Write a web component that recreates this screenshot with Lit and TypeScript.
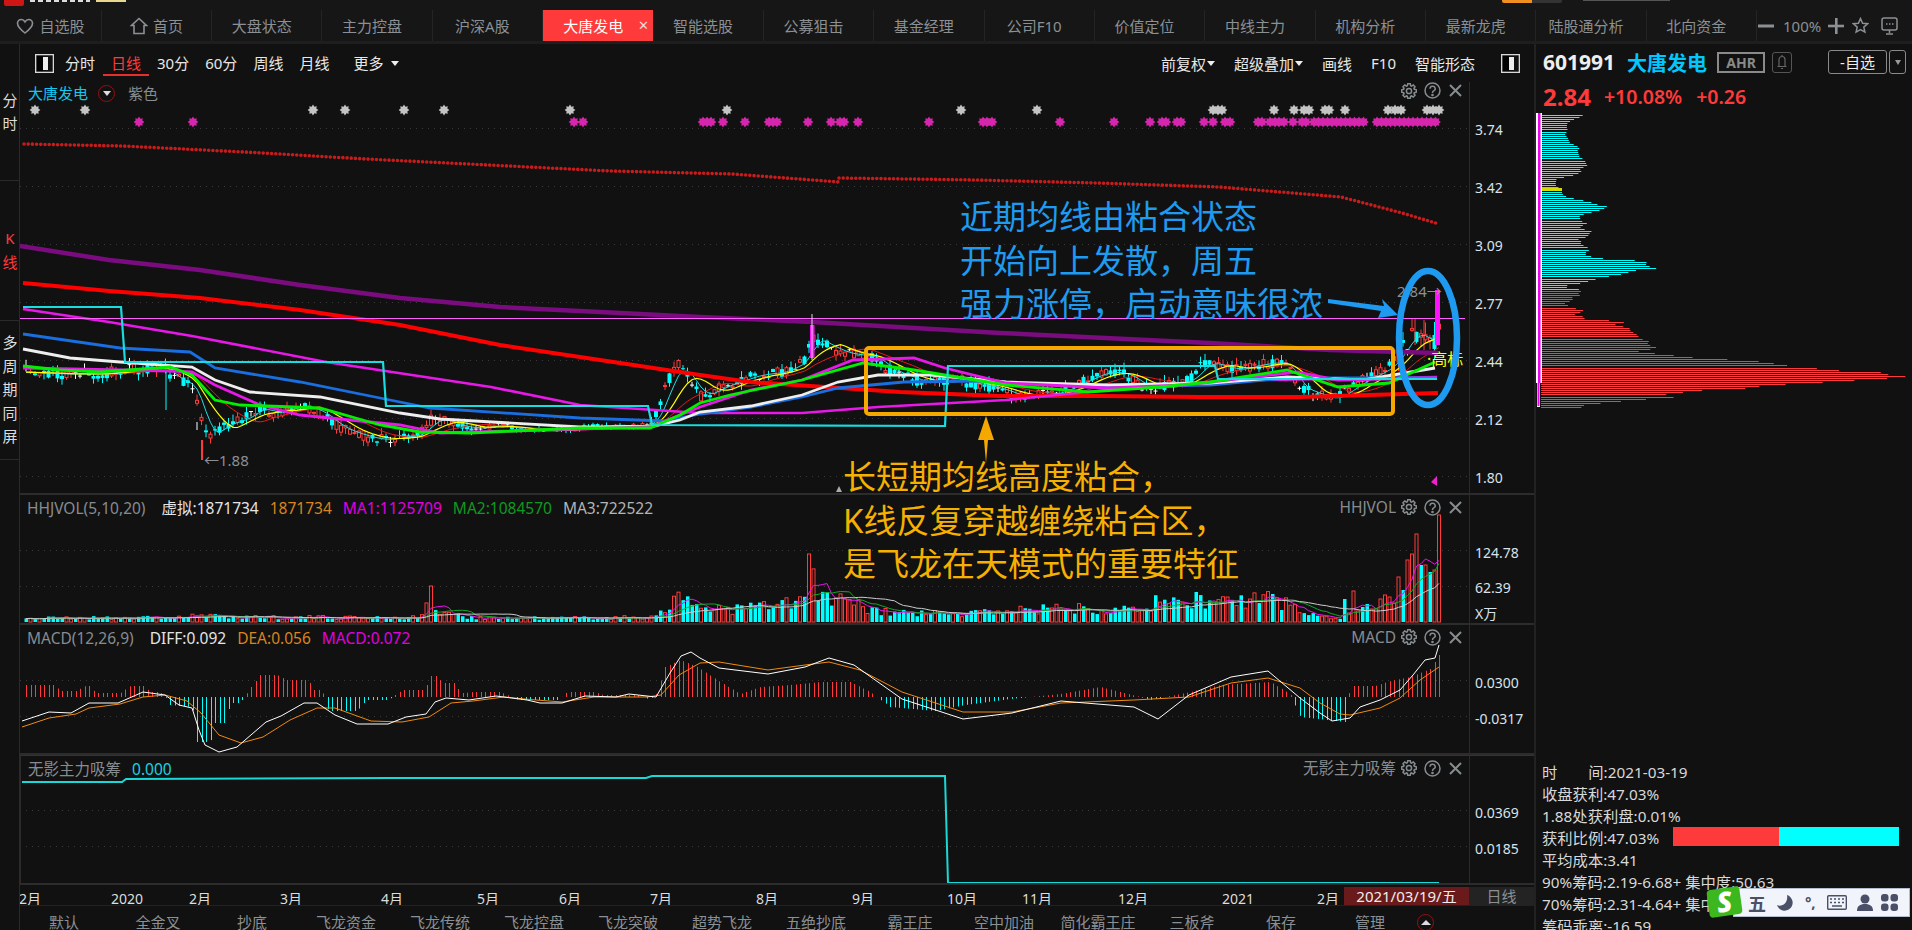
import { LitElement, html, svg, css } from "lit";
import { customElement } from "lit/decorators.js";

type P = [number, number];

function mulberry(a: number) {
  return () => {
    a |= 0; a = (a + 0x6d2b79f5) | 0;
    let t = Math.imul(a ^ (a >>> 15), 1 | a);
    t = (t + Math.imul(t ^ (t >>> 7), 61 | t)) ^ t;
    return ((t ^ (t >>> 14)) >>> 0) / 4294967296;
  };
}
const interp = (pts: P[], x: number) => {
  if (x <= pts[0][0]) return pts[0][1];
  for (let i = 1; i < pts.length; i++) {
    if (x <= pts[i][0]) {
      const [a, b] = pts[i - 1];
      const [c, d] = pts[i];
      return b + ((d - b) * (x - a)) / (c - a || 1);
    }
  }
  return pts[pts.length - 1][1];
};
const pl = (pts: P[]) => pts.map((p) => p.join(",")).join(" ");
const ma = (v: number[], n: number) =>
  v.map((_, i) => {
    const s = v.slice(Math.max(0, i - n + 1), i + 1);
    return s.reduce((a, b) => a + b, 0) / s.length;
  });

const N = 315;
const X = (i: number) => 1439 - 4.5 * (N - 1 - i);
const RED = "#ff3a3a";
const CY = "#00ffff";

const pricePath: P[] = [[23,372],[60,374],[100,374],[130,370],[165,366],[170,378],[180,380],[190,385],[197,400],[205,435],[212,435],[222,425],[240,420],[250,415],[262,405],[270,415],[285,410],[300,405],[320,412],[335,425],[350,432],[370,438],[385,440],[400,437],[420,435],[430,420],[445,420],[460,427],[480,428],[500,425],[520,430],[550,431],[580,428],[610,425],[630,426],[650,425],[660,405],[668,380],[678,365],[690,380],[700,397],[725,385],[756,375],[782,372],[805,360],[811,335],[822,343],[843,353],[873,357],[889,370],[924,383],[955,380],[996,388],[1021,397],[1057,393],[1103,372],[1123,373],[1149,390],[1190,380],[1205,362],[1236,370],[1266,363],[1287,363],[1297,387],[1333,400],[1358,383],[1389,367],[1405,345],[1414,330],[1425,340],[1432,345],[1439,330]];

const r1 = mulberry(7);
const candles = Array.from({ length: N }, (_, i) => {
  const x = X(i);
  const c = interp(pricePath, x);
  const a = x > 480 && x < 650 ? 2.5 : x > 1395 ? 11 : 5.5;
  const o = c + (r1() - 0.5) * a * 2;
  const cl = c + (r1() - 0.5) * a * 2;
  const hi = Math.min(o, cl) - r1() * a * 1.3;
  const lo = Math.max(o, cl) + r1() * a * 1.1;
  return { x, c, o, cl, hi, lo, up: cl < o };
});
const closes = candles.map((k) => k.c);
const maLine = (n: number): P[] => ma(closes, n).map((v, i) => [X(i), +v.toFixed(1)]);

const purple: P[] = [[20,246],[109,260],[200,270],[300,285],[400,298],[500,307],[600,312],[700,317],[812,322],[1000,333],[1210,343],[1330,350],[1438,353]];
const redThick: P[] = [[23,283],[109,291],[200,298],[300,310],[400,325],[500,345],[600,360],[700,375],[750,382],[900,392],[1000,396],[1100,396],[1200,397],[1300,397],[1438,393]];
const cyStep: P[] = [[23,307],[121,307],[125,362],[383,362],[386,406],[648,406],[652,425],[945,426],[948,366],[1215,366],[1218,379],[1437,379]];
const magLong: P[] = [[23,309],[109,322],[192,336],[326,362],[491,387],[580,405],[700,413],[802,413],[878,407],[1006,400],[1108,390],[1261,380],[1437,377]];
const blue: P[] = [[23,334],[120,348],[190,352],[215,368],[300,382],[380,398],[430,408],[580,418],[665,421],[700,414],[751,407],[802,397],[838,388],[904,382],[980,381],[1108,387],[1210,385],[1287,378],[1435,378]];
const white: P[] = [[23,349],[70,358],[120,362],[192,367],[215,380],[250,392],[320,397],[400,413],[440,419],[580,427],[650,427],[680,420],[700,412],[751,406],[802,395],[838,382],[878,375],[930,375],[1006,382],[1108,385],[1210,383],[1287,377],[1363,380],[1435,368]];
const green: P[] = [[23,366],[60,370],[100,372],[170,367],[192,375],[215,400],[240,405],[320,408],[380,425],[420,432],[470,433],[580,428],[650,428],[680,415],[700,403],[730,395],[802,380],[863,363],[914,370],[1006,385],[1088,392],[1159,387],[1210,382],[1287,370],[1338,387],[1389,383],[1435,362]];
const mag2: P[] = [[23,368],[170,371],[192,372],[215,385],[260,405],[300,415],[400,425],[440,433],[650,427],[700,407],[751,390],[802,380],[853,360],[914,358],[945,368],[1006,383],[1108,388],[1185,385],[1297,372],[1338,380],[1435,378]];
const dotA: P[] = [[24,144],[122,146],[244,152],[366,159],[488,165],[610,171],[732,174],[839,182]];
const dotB: P[] = [[839,178],[975,180],[1097,183],[1219,187],[1341,197],[1402,213],[1439,224]];

const whiteStars = [35,85,313,345,404,444,570,727,961,1037,1213,1218,1222,1274,1294,1304,1309,1325,1329,1345,1388,1395,1401,1427,1433,1439];
const magStars = [139,193,574,583,703,707,711,723,745,769,773,777,808,831,840,844,858,929,983,987,992,1060,1114,1150,1162,1166,1177,1181,1204,1213,1225,1230,1258,1262,1270,1275,1279,1284,1293,1302,1306];
for (let x = 1314; x <= 1367; x += 4.5) magStars.push(x);
for (let x = 1377; x <= 1439; x += 4.5) magStars.push(x);
const starPts = (x: number, y: number) => {
  const out: string[] = [];
  for (let i = 0; i < 16; i++) {
    const r = i % 2 ? 3.6 : 5.4;
    const a = (i * Math.PI) / 8;
    out.push(`${(x + r * Math.cos(a)).toFixed(1)},${(y + r * Math.sin(a)).toFixed(1)}`);
  }
  return out.join(" ");
};

const volEnv: P[] = [[26,6],[160,7],[200,9],[300,7],[420,7],[431,36],[436,20],[445,12],[470,8],[500,6],[650,7],[665,24],[678,32],[690,28],[730,20],[790,28],[805,34],[811,85],[818,40],[840,32],[880,15],[960,12],[1000,18],[1100,22],[1195,33],[1290,32],[1300,12],[1344,8]];
const volTail: [number, boolean][] = [[23,false],[9,true],[31,true],[11,true],[15,false],[18,false],[13,true],[13,true],[23,true],[27,true],[25,true],[19,true],[45,true],[32,false],[62,true],[68,true],[88,true],[57,false],[57,true],[50,false],[52,true],[107,true]];
const r2 = mulberry(21);
const vols = candles.map((k, i) => {
  const t = i - (N - volTail.length);
  if (t >= 0) return { x: k.x, h: volTail[t][0], up: volTail[t][1] };
  const spike = Math.abs(k.x - 811) < 2.3 || Math.abs(k.x - 431) < 2.3;
  return { x: k.x, h: interp(volEnv, k.x) * (spike ? 1 : 0.35 + r2() * 0.6), up: spike ? true : k.up };
});
const volH = vols.map((v) => v.h);
const volLine = (n: number): P[] => ma(volH, n).map((v, i) => [X(i), +(622 - v * 0.95).toFixed(1)]);

const macdEnv: P[] = [[22,12],[54,12],[60,6],[76,6],[85,11],[90,11],[95,4],[120,4],[130,11],[143,11],[150,5],[160,5],[165,0],[170,-8],[192,-10],[197,-45],[210,-45],[215,-26],[225,-26],[230,-6],[240,-6],[248,6],[260,22],[277,22],[286,17],[308,17],[313,7],[322,7],[328,-14],[357,-14],[366,-3],[388,-3],[402,7],[424,7],[431,21],[437,21],[442,14],[455,14],[460,4],[464,4],[473,5],[500,5],[518,-3],[558,-3],[567,5],[594,5],[603,2],[640,2],[645,-2],[655,0],[665,30],[680,37],[697,30],[720,15],[740,3],[760,10],[790,12],[820,15],[850,15],[870,5],[890,-10],[935,-14],[965,-8],[1010,-2],[1060,3],[1100,10],[1140,0],[1150,-3],[1190,5],[1220,12],[1270,15],[1290,3],[1300,-20],[1345,-25],[1350,11],[1375,11],[1390,16],[1410,20],[1430,28],[1439,42]];
const diff: P[] = [[22,721],[49,712],[71,713],[89,703],[118,703],[143,692],[165,695],[179,705],[192,708],[199,730],[205,745],[219,752],[237,747],[266,722],[281,716],[304,703],[317,703],[335,715],[357,724],[388,724],[406,717],[426,714],[435,702],[446,698],[469,700],[496,696],[527,700],[540,703],[562,703],[585,696],[616,697],[629,694],[656,697],[670,673],[681,656],[691,652],[700,658],[719,668],[768,674],[805,667],[829,658],[854,665],[902,699],[963,719],[1012,713],[1061,701],[1134,707],[1158,719],[1189,695],[1231,677],[1268,671],[1300,698],[1320,713],[1332,721],[1350,718],[1360,707],[1380,700],[1400,690],[1413,675],[1425,660],[1435,658],[1439,645]];
const dea: P[] = [[22,727],[49,718],[76,714],[89,708],[120,704],[143,697],[165,695],[187,701],[201,713],[219,735],[241,743],[263,737],[290,720],[317,708],[335,708],[371,721],[402,722],[429,717],[451,703],[473,701],[504,697],[536,700],[562,702],[594,697],[647,697],[661,695],[679,675],[700,663],[719,662],[768,670],[805,665],[829,662],[860,670],[902,692],[963,712],[1012,712],[1061,703],[1134,700],[1189,697],[1231,683],[1268,678],[1300,688],[1320,703],[1340,714],[1350,715],[1380,708],[1400,698],[1420,680],[1439,667]];
const wuying: P[] = [[22,782],[122,782],[126,779],[390,778],[646,778],[652,776],[945,776],[948,883],[1439,883]];

const chipEnv: P[] = [[165,158],[172,147],[180,125],[190,112],[200,110],[210,113],[220,105],[235,115],[245,118],[262,150],[270,143],[290,148],[300,165],[315,172],[325,150],[335,155],[345,130],[350,110],[355,80],[370,77],[378,78],[388,95],[400,97],[410,113],[415,140],[425,183],[430,190],[437,232],[445,222],[452,205],[462,163],[470,148],[480,153],[490,175],[497,147],[505,158],[512,185],[520,178],[530,172],[537,145],[545,155],[552,152],[565,178],[572,175],[578,160],[587,182],[593,210],[598,300],[604,350],[612,348],[618,358],[625,380],[631,315],[640,285],[646,262],[652,217],[658,183],[666,165],[673,115],[679,100],[685,145],[693,153],[700,145],[706,150],[712,125],[721,130],[727,107],[733,103],[739,123],[748,160],[754,155],[760,130],[767,158],[775,165],[781,255],[787,287],[793,252],[802,298],[808,300],[814,303],[820,317],[829,325],[834,332],[841,357],[847,352],[856,363],[862,383],[868,355],[874,320],[883,415],[889,456],[895,530],[901,664],[910,730],[916,765],[922,855],[928,910],[937,1092],[943,1068],[949,1146],[955,1050],[964,908],[970,822],[976,678],[982,702],[991,515],[997,460],[1003,407],[1009,438],[1018,318],[1024,250],[1030,195],[1036,150],[1045,158]];
const chips = (() => {
  const out: { y: number; x2: number; c: string }[] = [];
  for (let y = 115; y <= 408; y += 2.07) {
    const z = (y - 60) * 3;
    out.push({ y: Math.round(y) + 0.5, x2: 1530 + interp(chipEnv, z) / 3, c: z < 690 ? CY : RED });
  }
  return out;
})();

const gearPts = (() => {
  const o: string[] = [];
  for (let t = 0; t < 8; t++) {
    const a = (t * Math.PI) / 4;
    [[-0.3, 5.6], [-0.17, 7.4], [0.17, 7.4], [0.3, 5.6]].forEach(([d, r]) => {
      o.push(`${(8 + r * Math.cos(a + d)).toFixed(2)},${(8 + r * Math.sin(a + d)).toFixed(2)}`);
    });
  }
  return o.join(" ");
})();

const tabs = ["大盘状态","主力控盘","沪深A股","大唐发电","智能选股","公募狙击","基金经理","公司F10","价值定位","中线主力","机构分析","最新龙虎","陆股通分析","北向资金"];
const ticks: [string, number][] = [["2月",30],["2020",127],["2月",200],["3月",291],["4月",392],["5月",488],["6月",570],["7月",661],["8月",767],["9月",863],["10月",962],["11月",1037],["12月",1133],["2021",1238],["2月",1328]];
const bottoms = ["默认","全金叉","抄底","飞龙资金","飞龙传统","飞龙控盘","飞龙突破","超势飞龙","五绝抄底","霸王庄","空中加油","简化霸王庄","三板斧","保存","管理"];
const priceAxis: [string, number][] = [["3.74",128],["3.42",186],["3.09",244],["2.77",302],["2.44",360],["2.12",418],["1.80",476]];

const grid = (ys: number[]) => ys.map((y) => svg`<line x1="20" x2="1469" y1=${y + 0.5} y2=${y + 0.5} stroke="#3a3a3a" stroke-dasharray="1 5"/>`);
const axisText = (items: [string, number][]) => items.map(([t, y]) => svg`<text class="ax" x="1475" y=${y + 7}>${t}</text>`);
const frame = (top: number, bottom: number) => svg`
  <line x1="1469.5" x2="1469.5" y1=${top} y2=${bottom} stroke="#2a2a2a"/>
  <line x1="20" x2="1534" y1=${bottom - 1} y2=${bottom - 1} stroke="#2c2c2c" stroke-width="2"/>`;

@customElement("app-root")
export class AppRoot extends LitElement {
  static styles = css`
    :host { display: block; width: 1912px; height: 930px; overflow: hidden; background: #111; position: relative;
      font-family: "Noto Sans", "Noto Sans CJK SC", sans-serif; color: #ddd; font-size: 15px; }
    svg { display: block; }
    .titlebar { height: 10px; background: #161616; display: flex; overflow: hidden; }
    .t-logo { width: 20px; height: 6px; margin-left: 4px; background: #d01515; border-radius: 0 0 2px 2px; }
    .t-name { width: 60px; height: 2px; margin-left: 6px; background: repeating-linear-gradient(90deg,#ddd 0 5px,transparent 5px 8px); }
    .t-yel { width: 30px; height: 2px; margin-left: 6px; background: #e8d890; }
    .t-org { width: 60px; height: 3px; margin-left: 1376px; background: linear-gradient(90deg,#f09020 50%,#333 50%); border-radius: 0 0 2px 2px; }
    .t-gry { width: 87px; height: 1px; margin-left: 21px; background: #555; }
    .tabs { height: 31px; background: #161616; display: grid; grid-template-columns: 102px 110px repeat(14, 110.36px) 1fr; align-items: stretch; }
    .tab { display: flex; align-items: center; justify-content: center; gap: 5px; color: #8b9094; border-right: 1px solid #242424; position: relative; white-space: nowrap; padding-right: 10px; box-sizing: border-box; }
    .tab.icon { padding-right: 0; }
    .tab.on { background: #ff3a3a; color: #fff; border-right: none; }
    .tab .x { position: absolute; right: 4px; top: 6px; font-size: 13px; color: #f3dada; line-height: 18px; }
    .zoom { display: flex; align-items: center; color: #8b9094; padding-left: 1px; }
    .zoom .pct { margin: 0 7px 0 9px; }
    .zoom .star { margin-left: 8px; }
    .zoom .mon { margin-left: 12px; }
    .strip { height: 3px; background: #1e1e1e; }
    .body { height: 886px; display: flex; position: relative; }
    .side { width: 20px; box-sizing: border-box; border-right: 1px solid #2a2a2a; display: flex; flex-direction: column; flex: none; }
    .side div { display: flex; flex-direction: column; align-items: center; justify-content: center; line-height: 23.5px; border-bottom: 1px solid #2a2a2a; margin-right: -1px; color: #ddd; font-size: 15px; }
    .side div.s2 { color: #ff3a3a; }
    .s1 { height: 136px; } .s2 { height: 139px; } .s3 { height: 138px; }
    .col { width: 1514px; flex: none; position: relative; display: flex; flex-direction: column; }
    .toolbar { height: 38px; flex: none; display: flex; align-items: center; justify-content: space-between; color: #e8e8e8; }
    .tleft { display: flex; align-items: center; padding-left: 15px; }
    .tleft .it { padding: 0 8px; line-height: 28px; position: relative; }
    .tleft .it.on { color: #ff3a3a; }
    .tleft .it.on::after { content: ""; position: absolute; left: 0; right: 0; bottom: 1px; height: 2px; background: #e62e2e; }
    .tleft .more { margin-left: 8px; display: flex; align-items: center; gap: 8px; }
    .tleft .ics { margin-right: 3px; }
    .tright { display: flex; align-items: center; gap: 19px; padding-right: 14px; }
    .tright .dd { display: flex; align-items: center; gap: 1px; }
    .tright .ics { margin-left: 7px; }
    .tri { width: 0; height: 0; border-left: 4.5px solid transparent; border-right: 4.5px solid transparent; border-top: 5px solid #eee; }
    .pane { position: relative; flex: none; }
    .p-main { height: 413px; } .p-sub { height: 130px; }
    .p-wy { border-top: 1px solid #333; border-left: 1px solid #2c2c2c; box-sizing: border-box; margin-top: 0; }
    .legend { position: absolute; left: 7px; top: 2px; display: flex; align-items: center; gap: 11px; line-height: 22px; white-space: nowrap; font-size: 15.5px; }
    .legend.first { top: 0; left: 8px; font-size: 15px; }
    .g { color: #868c90; } .gap { margin-right: 5px; }
    .w { color: #e4e4e4; } .o { color: #d9841e; } .m { color: #e000e0; } .gr { color: #0e9a20; } .s { color: #b4b4b4; } .c { color: #12c8ee; } .cy { color: #18d4e0; }
    .ring { width: 15px; height: 15px; border: 1.5px solid #8a1515; border-radius: 50%; display: flex; align-items: center; justify-content: center; margin: 0 2px 0 -1px; }
    .tri-w { width: 0; height: 0; border-left: 4px solid transparent; border-right: 4px solid transparent; border-top: 5px solid #ddd; }
    .tri-u { width: 0; height: 0; border-left: 5px solid transparent; border-right: 5px solid transparent; border-bottom: 5px solid #ddd; }
    .tools { position: absolute; right: 72px; top: 2px; display: flex; align-items: center; line-height: 20px; color: #868c90; font-size: 15.5px; }
    .tools.main { top: 0; }
    .tools .lb { margin-right: 5px; }
    .tools .gear { margin-right: 7px; }
    .tools .help { margin-right: 8px; }
    .ax { fill: #d8e2ea; font-size: 14px; }
    .lbl { fill: #8a9096; font-size: 15px; }
    .gb { fill: #ffff00; font-size: 16px; }
    .notes { position: absolute; white-space: nowrap; font-size: 33px; line-height: 43.5px; z-index: 3; pointer-events: none; }
    .n-blue { left: 940px; top: 151px; color: #1e9bf0; }
    .n-org { left: 823px; top: 411px; color: #f5b000; }
    .timeaxis { height: 21px; flex: none; position: relative; overflow: hidden; border-bottom: 1px solid #222; box-sizing: border-box; }
    .tk { position: absolute; top: 0; line-height: 28px; transform: translateX(-50%); font-size: 14px; color: #ddd; }
    .datebox { position: absolute; left: 1324px; top: 2px; width: 125px; height: 19px; background: #6a1a1a; color: #eee; text-align: center; line-height: 19px; font-size: 15px; }
    .daybox { position: absolute; left: 1449px; top: 2px; width: 65px; height: 19px; background: #232323; color: #8b9094; text-align: center; line-height: 19px; }
    .btabs { height: 24px; flex: none; display: flex; overflow: hidden; color: #8b9094; }
    .bt { width: 94px; flex: none; text-align: center; line-height: 32px; white-space: nowrap; }
    .bt:first-child { width: 91px; padding-right: 3px; box-sizing: border-box; }
    .bt.nar { width: 84px; }
    .btabs .ring { margin: 8px 0 0 0; flex: none; }
    .panel { flex: 1; border-left: 2px solid #222; overflow: hidden; }
    .h1 { height: 36px; display: flex; align-items: center; padding: 0 6px 0 7px; }
    .code { font-size: 21px; font-weight: 700; color: #eee; margin-right: 12px; }
    .nm { font-size: 20px; font-weight: 700; color: #00c8ff; margin-right: 10px; }
    .ahr { width: 44px; height: 17px; border: 2px solid #8a8a8a; color: #8a8a8a; font-weight: 700; font-size: 14px; line-height: 17px; text-align: center; margin-right: 7px; }
    .bell { width: 18px; height: 19px; border: 1px solid #555; border-radius: 3px; display: flex; align-items: center; justify-content: center; }
    .opt { margin-left: auto; width: 57px; height: 22px; border: 1px solid #8a8a8a; border-radius: 3px; color: #eee; text-align: center; line-height: 22px; margin-right: 2px; }
    .optd { width: 15px; height: 22px; border: 1px solid #8a8a8a; border-radius: 3px; display: flex; align-items: center; justify-content: center; }
    .tri-s { width: 0; height: 0; border-left: 3px solid transparent; border-right: 3px solid transparent; border-top: 5px solid #999; }
    .h2 { height: 33px; display: flex; align-items: center; padding-left: 7px; color: #ff3a3a; font-weight: 600; font-size: 19.5px; }
    .px { font-size: 24px; font-weight: 700; margin-right: 13px; }
    .pc { margin-right: 14px; }
    .chips { height: 648px; }
    .info { line-height: 22px; padding-left: 6px; color: #d8d8d8; white-space: nowrap; font-size: 15.3px; }
    .row { height: 22px; display: flex; align-items: center; }
    .sp { display: inline-block; width: 31px; }
    .ratio { position: absolute; left: 1673px; top: 827px; width: 226px; height: 19px; display: flex; }
    .ratio i { display: block; height: 100%; }
    .r-a { width: 106px; background: #ff3a3a; } .r-b { width: 120px; background: #00ffff; }
    .ime { position: absolute; left: 1707px; top: 887px; width: 203px; height: 30px; z-index: 5; }
    .ime-bar { position: absolute; left: 26px; top: 1px; right: 0; bottom: 0; box-sizing: border-box; background: #f1f4fb; border: 1px solid #b4bccd; display: flex; align-items: center; padding-left: 14px; color: #4a5068; }
    .ime-wu { font-size: 18px; font-weight: 700; margin-right: 10px; }
    .ime-dot { font-size: 15px; font-weight: 700; margin: 0 11px; line-height: 1; }
    .ime-p { margin-left: 10px; }
    .ime-c { margin-left: 8px; }
    .ime-logo { position: absolute; left: 1px; top: 1px; width: 33px; height: 28px; background: #3cb81e; border-radius: 4px; transform: rotate(-8deg); color: #fff; font-size: 28px; font-weight: 900; font-style: italic; line-height: 27px; text-align: center; }
  `;

  private gear() {
    return html`<svg class="gear" width="16" height="16" viewBox="0 0 16 16" fill="none" stroke="#868c90" stroke-width="1.5"><polygon points=${gearPts}/><circle cx="8" cy="8" r="2.6"/></svg>`;
  }
  private help() {
    return html`<svg class="help" width="17" height="17" viewBox="0 0 17 17" fill="none" stroke="#868c90" stroke-width="1.5"><circle cx="8.5" cy="8.5" r="7.5"/><path d="M6 6.7a2.6 2.4 0 1 1 3.7 2.2c-.9.5-1.2 1-1.2 2"/><circle cx="8.5" cy="13" r=".6" fill="#868c90"/></svg>`;
  }
  private close() {
    return html`<svg width="13" height="13" viewBox="0 0 13 13" stroke="#868c90" stroke-width="2"><path d="M1 1l11 11M12 1L1 12"/></svg>`;
  }
  private tools(label: string, main = false) {
    return html`<div class="tools ${main ? "main" : ""}">${label ? html`<span class="lb">${label}</span>` : ""}${this.gear()}${this.help()}${this.close()}</div>`;
  }
  private panelIcon() {
    return html`<svg class="ics" width="19" height="19" viewBox="0 0 19 19"><rect x=".5" y=".5" width="18" height="18" fill="#111" stroke="#d8d8d8" stroke-width="1.6"/><rect x="2" y="2" width="6" height="15" fill="#000"/><rect x="8" y="3" width="5" height="13" fill="#eee"/></svg>`;
  }

  private mainChart() {
    const ks = candles.map((k) => {
      const doji = Math.abs(k.o - k.cl) < 0.8;
      const col = doji ? "#fff" : k.up ? RED : CY;
      const top = Math.min(k.o, k.cl), h = Math.max(1, Math.abs(k.o - k.cl));
      return svg`<line x1=${k.x} x2=${k.x} y1=${k.hi} y2=${k.lo} stroke=${col}/>${doji
        ? svg`<line x1=${k.x - 2} x2=${k.x + 2} y1=${top} y2=${top} stroke=${col}/>`
        : k.up
          ? svg`<rect x=${k.x - 1.5} y=${top} width="3" height=${h} fill="#111" stroke=${col}/>`
          : svg`<rect x=${k.x - 2} y=${top} width="4" height=${h} fill=${col}/>`}`;
    });
    return html`<svg width="1514" height="413" viewBox="20 82 1514 413">
      ${grid(priceAxis.map((p) => p[1]))}
      ${whiteStars.map((x) => svg`<polygon points=${starPts(x, 110)} fill="#c4c4c4"/>`)}
      ${magStars.map((x) => svg`<polygon points=${starPts(x, 122)} fill="#d626ae"/>`)}
      <polyline points=${pl(dotA)} fill="none" stroke="#c81c1c" stroke-width="3.6" stroke-linecap="round" stroke-dasharray="0 4.2"/>
      <polyline points=${pl(dotB)} fill="none" stroke="#c81c1c" stroke-width="3.6" stroke-linecap="round" stroke-dasharray="0 4.2"/>
      ${ks}
      <line x1="1415" x2="1415" y1="319" y2="345" stroke=${RED}/>
      <line x1="1424" x2="1424" y1="320" y2="350" stroke=${RED}/>
      <polyline points=${pl(maLine(14))} fill="none" stroke="#e81818" stroke-width="1"/>
      <polyline points=${pl(maLine(4))} fill="none" stroke="#20e0e0" stroke-width="1"/>
      <polyline points=${pl(maLine(8))} fill="none" stroke="#ffff00" stroke-width="1.2"/>
      <polyline points=${pl(purple)} fill="none" stroke="#7a0c80" stroke-width="4.5"/>
      <polyline points=${pl(redThick)} fill="none" stroke="#ff0000" stroke-width="4"/>
      <polyline points=${pl(magLong)} fill="none" stroke="#e818e8" stroke-width="2.6"/>
      <polyline points=${pl(blue)} fill="none" stroke="#1a6ee0" stroke-width="2.8"/>
      <polyline points=${pl(white)} fill="none" stroke="#eeeeee" stroke-width="2.8"/>
      <polyline points=${pl(mag2)} fill="none" stroke="#e818e8" stroke-width="2.8"/>
      <polyline points=${pl(green)} fill="none" stroke="#00f000" stroke-width="2.8"/>
      <polyline points=${pl(cyStep)} fill="none" stroke="#18dce0" stroke-width="2.2"/>
      <line x1="20" x2="1465" y1="318.5" y2="318.5" stroke="#ff60ff"/>
      <rect x="810" y="325" width="4.5" height="33" fill="#ff10ff"/><line x1="812" x2="812" y1="314" y2="360" stroke="#ddd"/>
      <rect x="1435" y="290" width="5" height="55" fill="#ff10ff"/>
      <line x1="202" x2="202" y1="440" y2="460" stroke=${RED} stroke-width="2"/>
      <line x1="197" x2="197" y1="422" y2="430" stroke="#fff"/>
      <line x1="166" x2="166" y1="372" y2="410" stroke=${CY}/>
      <text class="lbl" x="204" y="466">←1.88</text>
      <text class="lbl" x="1397" y="297">2.84→</text>
      <text class="gb" x="1427" y="365">·高标</text>
      <polygon points="839,486 842,492 836,492" fill="#aaa"/>
      <polygon points="1437,476 1437,486 1431,482" fill="#f020d0"/>
      <rect x="866" y="348" width="527" height="66" rx="3" fill="none" stroke="#f5a800" stroke-width="4"/>
      <polygon points="986,416 994,440 988,440 986,463 984,440 978,440" fill="#f5a800"/>
      <ellipse cx="1428" cy="338" rx="29" ry="67" fill="none" stroke="#1e9bf0" stroke-width="6.5"/>
      <polygon points="1328,299 1384,306 1382,299 1398,315 1378,318 1381,311 1328,303" fill="#1e9bf0"/>
      ${axisText(priceAxis)}
      ${frame(82, 495)}
    </svg>`;
  }

  private volChart() {
    const bars = vols.map((v) => v.up
      ? svg`<rect x=${v.x - 1.5} y=${622 - v.h} width="3" height=${v.h} fill="#111" stroke=${RED}/>`
      : svg`<rect x=${v.x - 1.5} y=${622 - v.h} width="3.5" height=${v.h} fill=${CY}/>`);
    return html`<svg width="1514" height="130" viewBox="20 495 1514 130">
      ${grid([550, 586])}
      ${bars}
      <polyline points=${pl(volLine(5))} fill="none" stroke="#f010f0"/>
      <polyline points=${pl(volLine(10))} fill="none" stroke="#12a828"/>
      <polyline points=${pl(volLine(20))} fill="none" stroke="#cccccc"/>
      ${axisText([["124.78", 550.5], ["62.39", 585.5], ["X万", 611.5]])}
      ${frame(495, 625)}
    </svg>`;
  }

  private macdChart() {
    const bars = candles.map((k) => {
      const v = interp(macdEnv, k.x);
      const x = Math.round(k.x) + 0.5;
      return svg`<line x1=${x} x2=${x} y1="697" y2=${697 - v} stroke=${v >= 0 ? RED : CY}/>`;
    });
    return html`<svg width="1514" height="130" viewBox="20 625 1514 130">
      ${grid([680, 716])}
      ${bars}
      <polyline points=${pl(dea)} fill="none" stroke="#f08a10" stroke-width="1"/>
      <polyline points=${pl(diff)} fill="none" stroke="#ffffff" stroke-width="1"/>
      ${axisText([["0.0300", 680.5], ["-0.0317", 716.5]])}
      ${frame(625, 755)}
    </svg>`;
  }

  private wyChart() {
    return html`<svg width="1513" height="129" viewBox="21 756 1513 129">
      ${grid([810, 846])}
      <polyline points=${pl(wuying)} fill="none" stroke="#18d8d8" stroke-width="2"/>
      ${axisText([["0.0369", 810.5], ["0.0185", 846.5]])}
      ${frame(756, 885)}
    </svg>`;
  }

  render() {
    return html`
      <div class="titlebar"><i class="t-logo"></i><i class="t-name"></i><i class="t-yel"></i><i class="t-org"></i><i class="t-gry"></i></div>
      <div class="tabs">
        <div class="tab icon"><svg width="18" height="18" viewBox="0 0 18 18" fill="none" stroke="#8b9094" stroke-width="1.6"><path d="M9 16C4 12 1.5 9.6 1.5 6.4 1.5 4 3.3 2.5 5.3 2.5 6.9 2.5 8.2 3.4 9 4.8 9.8 3.4 11.1 2.5 12.7 2.5c2 0 3.8 1.5 3.8 3.9C16.500 9.600 14 12 9 16Z"/></svg>自选股</div>
        <div class="tab icon"><svg width="18" height="18" viewBox="0 0 18 18" fill="none" stroke="#8b9094" stroke-width="1.6"><path d="M9 1.500 1.500 8.500H4V16.500H14V8.500H16.500Z"/></svg>首页</div>
        ${tabs.map((t) => html`<div class="tab ${t === "大唐发电" ? "on" : ""}">${t}${t === "大唐发电" ? html`<span class="x">✕</span>` : ""}</div>`)}
        <div class="zoom">
          <svg width="16" height="4" viewBox="0 0 16 4"><rect width="16" height="3" y=".5" fill="#8b9094"/></svg>
          <span class="pct">100%</span>
          <svg width="16" height="16" viewBox="0 0 16 16" fill="#8b9094"><rect x="7" width="2.600" height="16"/><rect y="6.700" width="16" height="2.600"/></svg>
          <svg class="star" width="17" height="17" viewBox="0 0 17 17" fill="none" stroke="#8b9094" stroke-width="1.5"><path d="M8.500 1.500l2.100 4.700 5 .5-3.800 3.400 1.100 5-4.400-2.600-4.400 2.600 1.100-5L1.400 6.700l5-.5Z"/></svg>
          <svg class="mon" width="17" height="18" viewBox="0 0 17 18" fill="none" stroke="#8b9094" stroke-width="1.5"><rect x="1" y="1" width="15" height="12" rx="2"/><path d="M8.500 13v3M5 17h7M5 7h1.500M8 7h1.500M11 7h1.500"/></svg>
        </div>
      </div>
      <div class="strip"></div>
      <div class="body">
        <div class="side">
          <div class="s1"><span>分</span><span>时</span></div>
          <div class="s2"><span>K</span><span>线</span></div>
          <div class="s3"><span>多</span><span>周</span><span>期</span><span>同</span><span>屏</span></div>
        </div>
        <div class="col">
          <div class="toolbar">
            <div class="tleft">
              ${this.panelIcon()}
              <span class="it">分时</span><span class="it on">日线</span><span class="it">30分</span><span class="it">60分</span><span class="it">周线</span><span class="it">月线</span>
              <span class="it more">更多<i class="tri"></i></span>
            </div>
            <div class="tright">
              <span class="dd">前复权<i class="tri"></i></span>
              <span class="dd">超级叠加<i class="tri"></i></span>
              <span>画线</span><span>F10</span><span>智能形态</span>
              ${this.panelIcon()}
            </div>
          </div>
          <div class="pane p-main">${this.mainChart()}
            <div class="legend first"><span class="c">大唐发电</span><span class="ring"><i class="tri-w"></i></span><span class="g">紫色</span></div>
            ${this.tools("", true)}
          </div>
          <div class="pane p-sub">${this.volChart()}
            <div class="legend"><span class="g gap">HHJVOL(5,10,20)</span><span class="w">虚拟:1871734</span><span class="o">1871734</span><span class="m">MA1:1125709</span><span class="gr">MA2:1084570</span><span class="s">MA3:722522</span></div>
            ${this.tools("HHJVOL")}
          </div>
          <div class="pane p-sub">${this.macdChart()}
            <div class="legend"><span class="g gap">MACD(12,26,9)</span><span class="w">DIFF:0.092</span><span class="o">DEA:0.056</span><span class="m">MACD:0.072</span></div>
            ${this.tools("MACD")}
          </div>
          <div class="pane p-sub p-wy">${this.wyChart()}
            <div class="legend"><span class="g">无影主力吸筹</span><span class="cy">0.000</span></div>
            ${this.tools("无影主力吸筹")}
          </div>
          <div class="timeaxis">
            ${ticks.map(([t, x]) => html`<span class="tk" style="left:${x - 20}px">${t}</span>`)}
            <div class="datebox">2021/03/19/五</div>
            <div class="daybox">日线</div>
          </div>
          <div class="btabs">
            ${bottoms.map((b) => html`<div class="bt ${b === "保存" ? "nar" : ""}">${b}</div>`)}
            <span class="ring"><i class="tri-u"></i></span>
          </div>
          <div class="notes n-blue"><div>近期均线由粘合状态</div><div>开始向上发散，周五</div><div>强力涨停，启动意味很浓</div></div>
          <div class="notes n-org"><div>长短期均线高度粘合，</div><div>K线反复穿越缠绕粘合区，</div><div>是飞龙在天模式的重要特征</div></div>
        </div>
        <div class="panel">
          <div class="h1">
            <span class="code">601991</span><span class="nm">大唐发电</span><span class="ahr">AHR</span>
            <span class="bell"><svg width="12" height="16" viewBox="0 0 12 16" fill="none" stroke="#666" stroke-width="1.2"><path d="M6 1v1.500M3 12V5.500a3 3 0 0 1 6 0V12M1.500 12.500h9M5 14.500h2"/></svg></span>
            <span class="opt">-自选</span><span class="optd"><i class="tri-s"></i></span>
          </div>
          <div class="h2"><span class="px">2.84</span><span class="pc">+10.08%</span><span>+0.26</span></div>
          <div class="chips">
            <svg width="376" height="296" viewBox="1536 113 376 296">
              ${chips.map((c) => svg`<line x1="1541" x2=${c.x2} y1=${c.y} y2=${c.y} stroke=${c.c}/>`)}
              <rect x="1542" y="188" width="20" height="3" fill="#d8d800"/>
              <rect x="1536" y="113" width="6" height="270" fill="#fff"/>
              <rect x="1538" y="113" width="2.500" height="270" fill="#f000f0"/>
              <rect x="1537" y="383" width="3" height="24" fill="#fff"/>
              <rect x="1537.500" y="383" width="2" height="23" fill="#f000f0"/>
            </svg>
          </div>
          <div class="info">
            <div class="row">时<span class="sp"></span>间:2021-03-19</div>
            <div class="row">收盘获利:47.03%</div>
            <div class="row">1.88处获利盘:0.01%</div>
            <div class="row">获利比例:47.03%</div>
            <div class="row">平均成本:3.41</div>
            <div class="row">90%筹码:2.19-6.68+ 集中度:50.63</div>
            <div class="row">70%筹码:2.31-4.64+ 集中度:33.49</div>
            <div class="row">筹码乖离:-16.59</div>
          </div>
        </div>
      </div>
      <div class="ratio"><i class="r-a"></i><i class="r-b"></i></div>
      <div class="ime">
        <div class="ime-bar">
          <span class="ime-wu">五</span>
          <svg width="18" height="18" viewBox="0 0 18 18" fill="#4a5068"><path d="M11 1a8 8 0 1 1-10 10c5 2.500 11.500-2.500 10-10Z"/></svg>
          <span class="ime-dot">°,</span>
          <svg width="20" height="15" viewBox="0 0 20 15" fill="none" stroke="#4a5068" stroke-width="1.400"><rect x=".7" y=".7" width="18.600" height="13.600" rx="1"/><path d="M3 4h2M7 4h2M11 4h2M15 4h2M3 7.500h2M7 7.500h2M11 7.500h2M15 7.500h2M5 11h10" stroke-width="1.600"/></svg>
          <svg class="ime-p" width="16" height="18" viewBox="0 0 16 18" fill="#4a5068"><circle cx="8" cy="5" r="4.500"/><path d="M0 17c0-5 3-7 8-7s8 2 8 7Z"/></svg>
          <svg class="ime-c" width="17" height="17" viewBox="0 0 17 17" fill="#4a5068"><rect width="7.500" height="7.500" rx="3"/><rect x="9.500" width="7.500" height="7.500" rx="3"/><rect y="9.500" width="7.500" height="7.500" rx="3"/><rect x="9.500" y="9.500" width="7.500" height="7.500" rx="3"/></svg>
        </div>
        <div class="ime-logo">S</div>
      </div>
    `;
  }
}
